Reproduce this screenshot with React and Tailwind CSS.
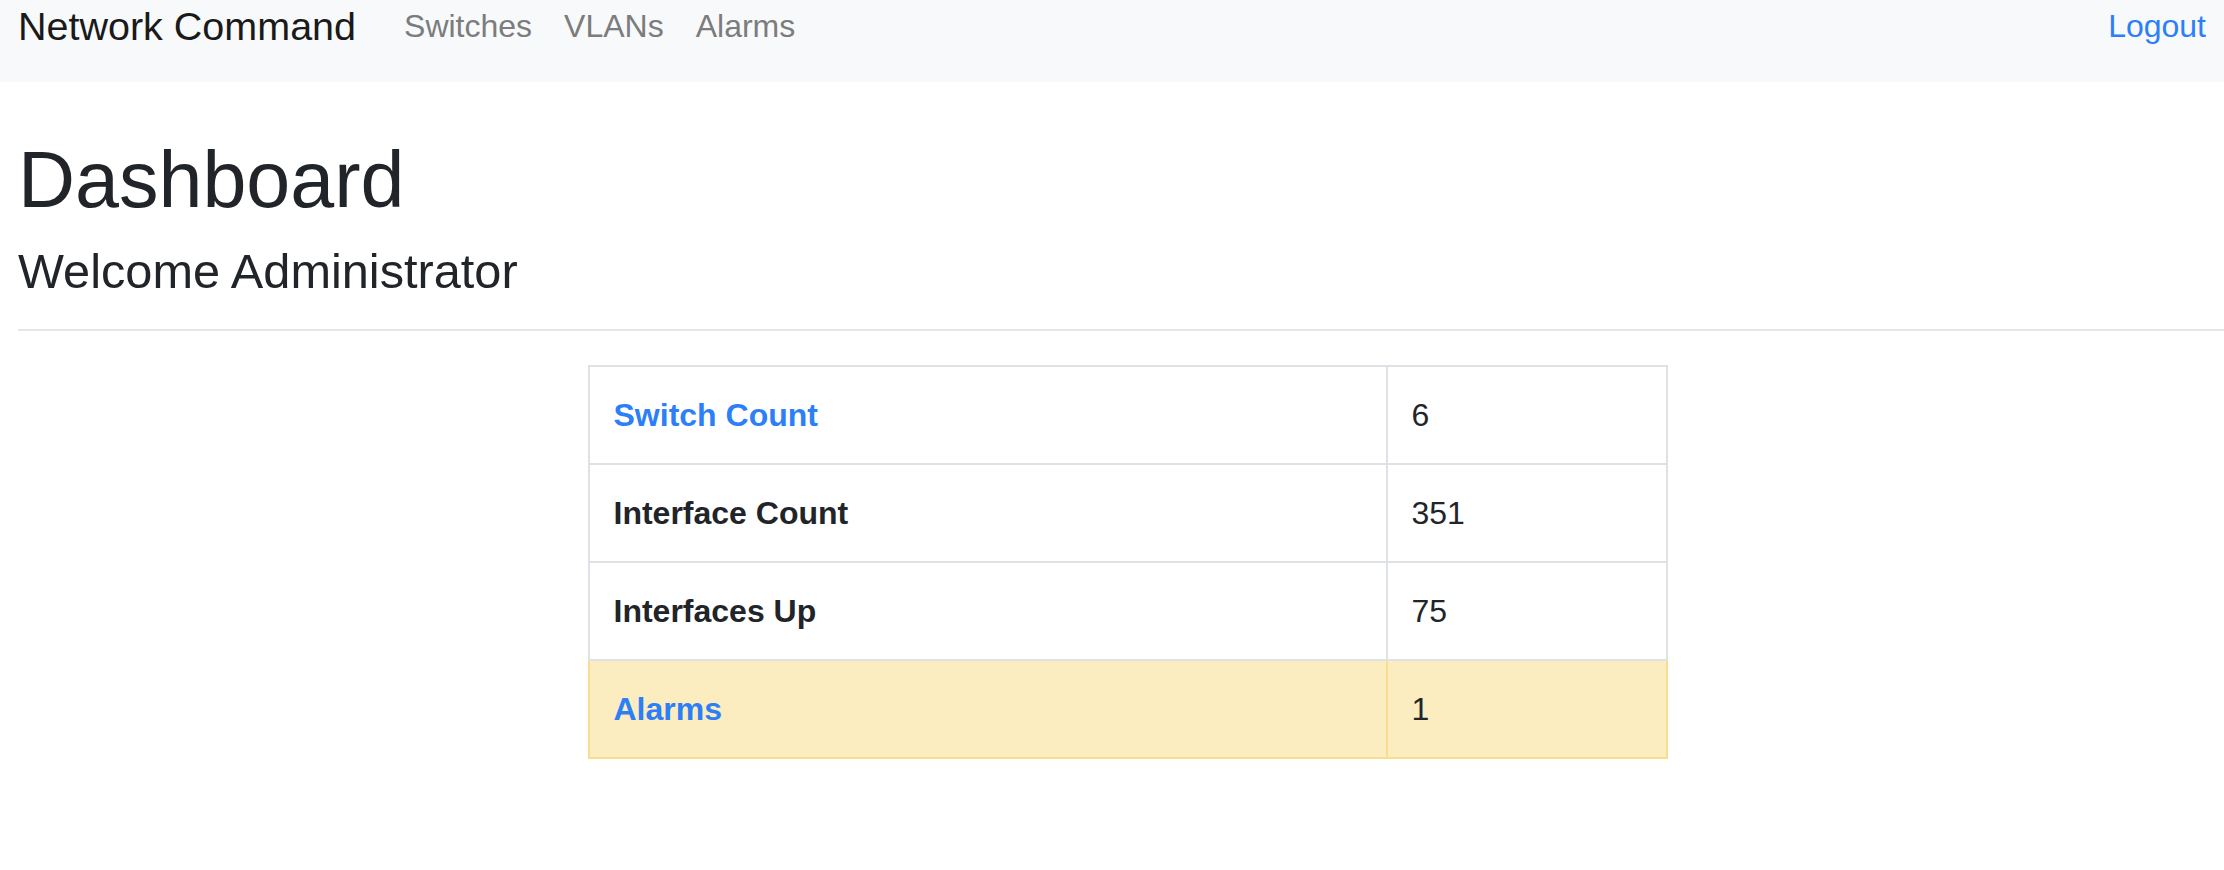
import React from 'react';

const rows = [
  { label: 'Switch Count', value: 6, link: true },
  { label: 'Interface Count', value: 351 },
  { label: 'Interfaces Up', value: 75 },
  { label: 'Alarms', value: 1, link: true, warning: true },
];

function Navbar() {
  return (
    <nav className="flex h-[82px] items-start justify-between bg-[#f8f9fa] pl-[18px] pr-[18px] pt-[2px]">
      <div className="flex items-start">
        <a href="#" className="mr-[32px] text-[39.5px] leading-[48px] text-[#1a1a1a]">
          Network Command
        </a>
        <ul className="flex">
          {['Switches', 'VLANs', 'Alarms'].map((item) => (
            <li key={item}>
              <a href="#" className="block px-[16px] text-[32px] leading-[48px] text-[#7b7c7d]">
                {item}
              </a>
            </li>
          ))}
        </ul>
      </div>
      <a href="#" className="text-[32px] leading-[48px] text-[#2d7ff7]">
        Logout
      </a>
    </nav>
  );
}

export default function App() {
  return (
    <div className="min-h-[870px] bg-white text-[#212529] font-['Liberation_Sans',Arial,sans-serif]">
      <Navbar />

      <div className="pl-[18px]">
        <h1 className="mt-[50px] text-[79px] leading-[96px] font-normal">Dashboard</h1>
        <h4 className="mt-[14px] text-[48.7px] leading-[58px] font-normal">Welcome Administrator</h4>
        <hr className="mt-[29px] border-t-2 border-[#e6e6e6]" />
      </div>

      <div className="flex justify-center pl-[31px] pt-[34px]">
        <table className="w-[1080px] border-collapse">
          <tbody>
            {rows.map((row) => (
              <tr key={row.label} className={row.warning ? 'bg-[#fcedc0]' : ''}>
                <td
                  className={`w-[798px] border-2 px-[24px] py-[24px] text-[32px] leading-[48px] font-bold ${
                    row.warning ? 'border-[#f9df8d]' : 'border-[#dee2e6]'
                  }`}
                >
                  {row.link ? (
                    <a href="#" className="text-[#2d7ff7]">
                      {row.label}
                    </a>
                  ) : (
                    row.label
                  )}
                </td>
                <td
                  className={`border-2 px-[24px] py-[24px] text-[32px] leading-[48px] ${
                    row.warning ? 'border-[#f9df8d]' : 'border-[#dee2e6]'
                  }`}
                >
                  {row.value}
                </td>
              </tr>
            ))}
          </tbody>
        </table>
      </div>
    </div>
  );
}
